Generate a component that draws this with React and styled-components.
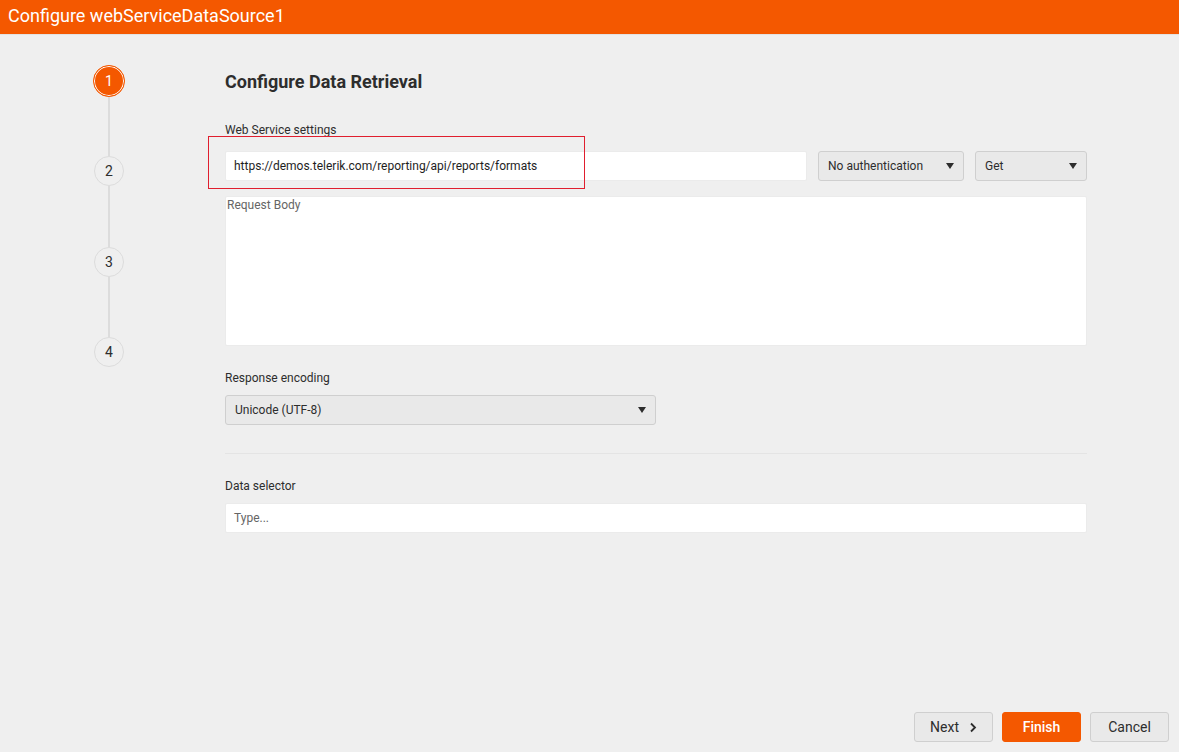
import styled, {createGlobalStyle} from "styled-components"

const orange = "#f45800"

const Global = createGlobalStyle`
  html, body {
    margin: 0;
    padding: 0;
    background: #efefef;
    font-family: Roboto, "Liberation Sans", sans-serif;
    color: #2d2d2d;
  }
`

const Shell = styled.div`
  width: 1179px;
  height: 752px;
  display: flex;
  flex-direction: column;
  background: #efefef;
  overflow: hidden;
`

const TitleBar = styled.div`
  height: 34px;
  flex: none;
  background: ${orange};
  color: #fff;
  font-size: 18px;
  line-height: 32px;
  padding-left: 8px;
  border-bottom: 1px solid #e2e2e2;
`

const Body = styled.div`
  flex: 1;
  display: flex;
  padding-top: 30px;
`

const Stepper = styled.div`
  width: 218px;
  margin-right: 7px;
  flex: none;
  display: flex;
  flex-direction: column;
  align-items: center;
`

const Step = styled.div`
  box-sizing: border-box;
  width: ${p => (p.$active ? 32 : 30)}px;
  height: ${p => (p.$active ? 32 : 30)}px;
  border-radius: 50%;
  display: flex;
  align-items: center;
  justify-content: center;
  font-size: 14px;
  border: 1px solid ${p => (p.$active ? orange : "#dcdcdc")};
  background: ${p => (p.$active ? orange : "#efefef")};
  color: ${p => (p.$active ? "#fff" : "#2d2d2d")};
  box-shadow: ${p => (p.$active ? "inset 0 0 0 1px #fff" : "none")};
`

const Connector = styled.div`
  width: 2px;
  height: ${p => p.$h}px;
  background: #dcdcdc;
`

const Content = styled.div`
  width: 862px;
  display: flex;
  flex-direction: column;
`

const Heading = styled.h2`
  margin: 5px 0 0;
  font-size: 18px;
  font-weight: 700;
  line-height: 24px;
  color: #2d2d2d;
`

const Label = styled.div`
  font-size: 12px;
  line-height: 16px;
  margin-top: ${p => p.$top}px;
  margin-bottom: ${p => p.$bottom}px;
`

const Row = styled.div`
  position: relative;
  display: flex;
  gap: 11px;
`

const Input = styled.div`
  box-sizing: border-box;
  height: 30px;
  flex: ${p => (p.$grow ? 1 : "none")};
  background: #fff;
  border: 1px solid #ebebeb;
  border-radius: 2px;
  padding: 0 8px;
  display: flex;
  align-items: center;
  font-size: 12px;
  color: ${p => (p.$muted ? "#656565" : "#1e1e1e")};
`

const Select = styled.div`
  box-sizing: border-box;
  height: 30px;
  width: ${p => p.$w}px;
  flex: none;
  background: #e9e9e9;
  border: 1px solid #cfcfcf;
  border-radius: 3px;
  padding: 0 9px;
  display: flex;
  align-items: center;
  justify-content: space-between;
  font-size: 12px;
  color: #2d2d2d;
`

const Caret = styled.span`
  width: 0;
  height: 0;
  border-left: 4px solid transparent;
  border-right: 4px solid transparent;
  border-top: 6px solid #2d2d2d;
`

const Highlight = styled.div`
  position: absolute;
  left: -17px;
  top: -15px;
  width: 377px;
  height: 53px;
  box-sizing: border-box;
  border: 1px solid #e01e2e;
  pointer-events: none;
`

const TextArea = styled.div`
  box-sizing: border-box;
  height: 150px;
  margin-top: 15px;
  background: #fff;
  border: 1px solid #ebebeb;
  border-radius: 2px;
  padding: 1px;
  font-size: 12px;
  color: #656565;
`

const Divider = styled.div`
  height: 1px;
  background: #e4e4e4;
  margin-top: 28px;
`

const Footer = styled.div`
  display: flex;
  justify-content: flex-end;
  gap: 9px;
  padding: 0 10px 10px 0;
`

const Button = styled.button`
  box-sizing: border-box;
  width: 79px;
  height: 30px;
  border-radius: 3px;
  font-family: inherit;
  font-size: 14px;
  display: flex;
  align-items: center;
  justify-content: center;
  gap: 10px;
  cursor: pointer;
  border: 1px solid ${p => (p.$primary ? orange : "#cfcfcf")};
  background: ${p => (p.$primary ? orange : "#e9e9e9")};
  color: ${p => (p.$primary ? "#fff" : "#2d2d2d")};
  font-weight: ${p => (p.$primary ? 500 : 400)};
`

const Chevron = () => (
  <svg width="8" height="11" viewBox="0 0 8 11">
    <path d="M2 1.5 L6 5.5 L2 9.5" fill="none" stroke="#2d2d2d" strokeWidth="1.8" />
  </svg>
)

export default function App() {
  return (
    <Shell>
      <Global />
      <TitleBar>Configure webServiceDataSource1</TitleBar>
      <Body>
        <Stepper>
          <Step $active>1</Step>
          <Connector $h={59} />
          <Step>2</Step>
          <Connector $h={61} />
          <Step>3</Step>
          <Connector $h={60} />
          <Step>4</Step>
        </Stepper>
        <Content>
          <Heading>Configure Data Retrieval</Heading>
          <Label $top={28} $bottom={13}>Web Service settings</Label>
          <Row>
            <Input $grow>https://demos.telerik.com/reporting/api/reports/formats</Input>
            <Select $w={146}>No authentication<Caret /></Select>
            <Select $w={112}>Get<Caret /></Select>
            <Highlight />
          </Row>
          <TextArea>Request Body</TextArea>
          <Label $top={24} $bottom={9}>Response encoding</Label>
          <Select $w={431}>Unicode (UTF-8)<Caret /></Select>
          <Divider />
          <Label $top={24} $bottom={9}>Data selector</Label>
          <Input $muted>Type...</Input>
        </Content>
      </Body>
      <Footer>
        <Button>Next <Chevron /></Button>
        <Button $primary>Finish</Button>
        <Button>Cancel</Button>
      </Footer>
    </Shell>
  )
}
